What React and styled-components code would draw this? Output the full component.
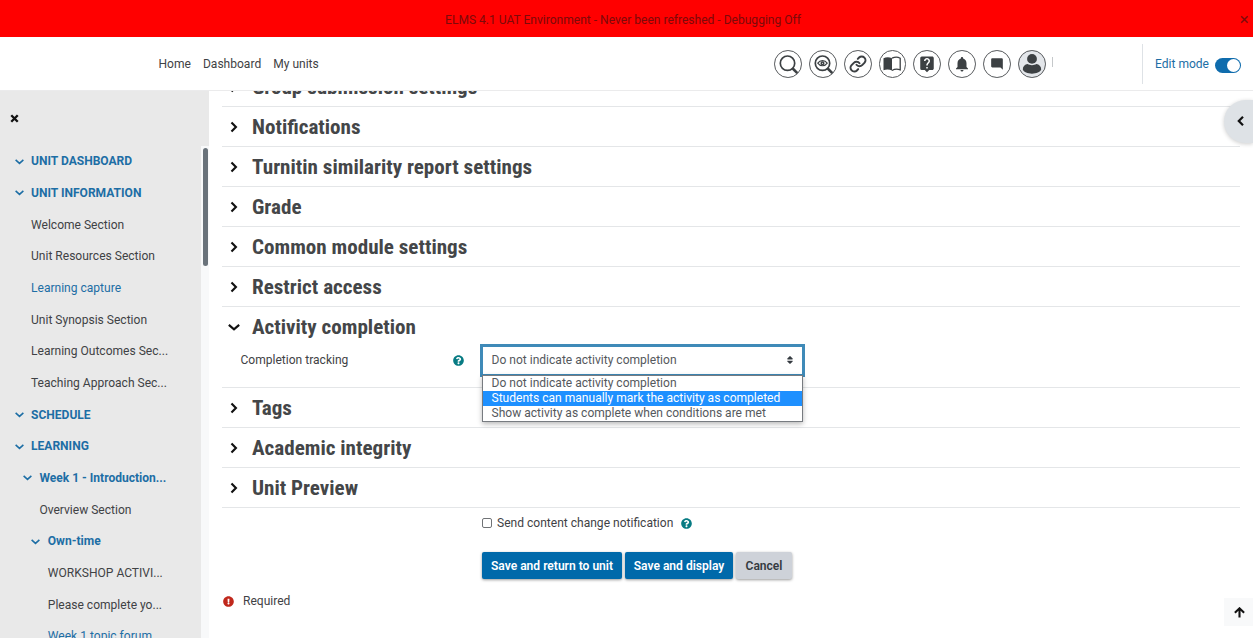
import React from "react";
import styled, { createGlobalStyle } from "styled-components";
import { FaQuestionCircle, FaExclamationCircle, FaSort } from "react-icons/fa";
import { FiLink } from "react-icons/fi";
import { MdLiveHelp, MdNotifications, MdModeComment } from "react-icons/md";

const Global = createGlobalStyle`
  * { box-sizing: border-box; }
  html, body { margin: 0; height: 100%; overflow: hidden; }
  body { font-family: Roboto, "Liberation Sans", sans-serif; font-size: 12.05px; color: #3f4245; background: #fff; }
  button { font: inherit; border: 0; margin: 0; }
`;

const Page = styled.div`
  display: flex;
  flex-direction: column;
  height: 638px;
  width: 1253px;
  position: relative;
  overflow: hidden;
`;

const Alert = styled.div`
  display: flex;
  align-items: center;
  flex: 0 0 37px;
  background: #ff0000;
  color: #7c0a0a;
  padding: 2px 4px 0 0;
`;
const AlertText = styled.div`
  flex: 1;
  text-align: center;
  padding-left: 6px;
  white-space: nowrap;
`;

const TopBar = styled.header`
  display: flex;
  align-items: center;
  flex: 0 0 54px;
  border-bottom: 1px solid #ebebec;
  background: #fff;
`;
const Nav = styled.nav`
  display: flex;
  gap: 12px;
  flex: 1;
  padding-left: 158.5px;
`;
const NavLink = styled.span`
  white-space: nowrap;
`;
const Tools = styled.div`
  display: flex;
  align-items: center;
  gap: 7px;
  padding-top: 1px;
`;
const Round = styled.span`
  display: flex;
  align-items: center;
  justify-content: center;
  width: 27.8px;
  height: 27.8px;
  border-radius: 50%;
  border: 1px solid #55585b;
  color: #3c4043;
  background: ${(p) => (p.$filled ? "#e3e6ea" : "#fff")};
`;
const Tick = styled.span`
  width: 1px;
  height: 10px;
  margin: -3px 0 0 -1px;
  background: #c5c8ca;
`;
const EditMode = styled.div`
  display: flex;
  align-items: center;
  gap: 6px;
  height: 40px;
  width: 111px;
  margin-left: 89.5px;
  padding-left: 12px;
  border-left: 1px solid #dee2e6;
  color: #1d6ea5;
`;
const Toggle = styled.span`
  display: flex;
  justify-content: flex-end;
  width: 26px;
  height: 15px;
  padding: 1px;
  margin-top: 3px;
  border-radius: 8px;
  background: #0f6cad;
`;
const Knob = styled.span`
  width: 13px;
  height: 13px;
  border-radius: 50%;
  background: #fff;
`;

const Body = styled.div`
  display: flex;
  flex: 1;
  min-height: 0;
`;
const Sidebar = styled.aside`
  display: flex;
  flex-direction: column;
  flex: 0 0 209px;
  background: #e9e9e9;
`;
const SideHead = styled.div`
  display: flex;
  align-items: center;
  flex: 0 0 55px;
  padding-left: 10px;
`;
const SideScroll = styled.div`
  display: flex;
  flex: 1;
  min-height: 0;
`;
const Tree = styled.div`
  flex: 0 0 201px;
  overflow: hidden;
`;
const Track = styled.div`
  flex: 1;
  padding: 2px 1px 0 2px;
  background: #f8f9fa;
`;
const Thumb = styled.div`
  height: 118px;
  width: 5px;
  border-radius: 3px;
  background: #6a737b;
`;
const TreeRow = styled.div`
  display: flex;
  align-items: center;
  height: 31.67px;
  padding: 0 0 0 ${(p) => 14.5 + p.$level * 8.4}px;
  &:first-child { margin-top: -0.5px; }
  white-space: nowrap;
  color: ${(p) => (p.$link ? "#1d6ea5" : "#3f4245")};
  font-weight: ${(p) => (p.$open ? 700 : 400)};
  svg { color: #1d6ea5; }
`;
const TreeIcon = styled.span`
  display: flex;
  width: 16.5px;
`;

const Main = styled.main`
  display: flex;
  flex-direction: column;
  flex: 1;
  overflow: hidden;
  padding: 0 13px 0 13px;
`;
const Section = styled.section`
  flex: 0 0 ${(p) => p.$height || 40}px;
  border-bottom: 1px solid #e4e6e8;
  &:first-child { margin-top: -24px; }
`;
const SectionHead = styled.div`
  display: flex;
  align-items: center;
  height: 39px;
  padding: 0 0 0 6px;
  color: #111;
`;
const SectionTitle = styled.h3`
  margin: 1px 0 0 12px;
  font-family: "Roboto Condensed", Roboto, sans-serif;
  font-stretch: 75%;
  font-size: 21.1px;
  font-weight: 700;
  line-height: 24px;
  color: #444648;
  white-space: nowrap;
`;
const Field = styled.div`
  display: flex;
  align-items: center;
  height: 30px;
  margin-top: -1px;
  padding-left: 18.5px;
`;
const FieldLabel = styled.label`
  flex: 0 0 212px;
`;
const SelectWrap = styled.div`
  position: relative;
  margin-left: 16px;
`;
const SelectBox = styled.div`
  display: flex;
  align-items: center;
  justify-content: space-between;
  width: 325px;
  height: 33px;
  padding: 0 7px 0 9px;
  border: 3px solid #3f8ab8;
  background: #fff;
  color: #55595d;
`;
const Menu = styled.div`
  position: absolute;
  z-index: 2;
  top: 31px;
  left: 2px;
  width: 321px;
  height: 47px;
  border: 1px solid #777b80;
  background: #fff;
  box-shadow: 0 2px 5px rgba(0, 0, 0, 0.28);
`;
const Option = styled.div`
  height: 15px;
  line-height: 15px;
  padding-left: 9px;
  white-space: nowrap;
  color: ${(p) => (p.$active ? "#fff" : "#55595d")};
  background: ${(p) => (p.$active ? "#1e90ff" : "transparent")};
`;
const Help = styled(FaQuestionCircle)`
  color: #077b83;
  flex: none;
`;
const CheckRow = styled.div`
  display: flex;
  align-items: center;
  height: 30px;
  padding-left: 260px;
`;
const CheckBox = styled.span`
  width: 10px;
  height: 10px;
  border: 1px solid #707376;
  border-radius: 2px;
  margin-right: 5px;
`;
const CheckText = styled.span`
  margin-right: 8px;
`;
const Actions = styled.div`
  display: flex;
  gap: 3px;
  margin-top: 14px;
  padding-left: 260px;
`;
const Button = styled.button`
  height: 27px;
  width: ${(p) => p.$width}px;
  padding: 0;
  white-space: nowrap;
  font-weight: 600;
  border-radius: 2px;
  color: ${(p) => (p.$plain ? "#343a40" : "#fff")};
  background: ${(p) => (p.$plain ? "#ced2d9" : "#0069aa")};
  box-shadow: 0 1px 3px rgba(0, 0, 0, 0.4);
`;
const Required = styled.div`
  display: flex;
  align-items: center;
  gap: 9.5px;
  margin-top: 15px;
  padding-left: 0.5px;
  svg { color: #c0281c; }
`;

const Drawer = styled.div`
  position: absolute;
  right: 0;
  top: 100px;
  width: 29px;
  height: 43px;
  display: flex;
  align-items: center;
  padding: 0 0 2px 12px;
  border-radius: 22px 0 0 22px;
  background: #dee2e6;
  box-shadow: 0 1px 4px rgba(0, 0, 0, 0.2);
`;
const ToTop = styled.div`
  position: absolute;
  right: 0;
  top: 598px;
  width: 29px;
  height: 28px;
  display: flex;
  align-items: center;
  justify-content: center;
  padding-left: 1px;
  background: #f8f9fa;
`;

const Stroke = ({ d, size = 10, width = 2, color = "currentColor" }) => (
  <svg width={size} height={size} viewBox="0 0 10 10" fill="none" stroke={color} strokeWidth={width}>
    <path d={d} />
  </svg>
);
const RIGHT = "M2.9 1.3 6.6 5 2.9 8.7";
const DOWN = "M.7 3.2 5 7 9.3 3.2";
const LEFT = "M7 .8 2.8 5 7 9.2";
const CROSS = "M1.4 1.4 8.6 8.6M8.6 1.4 1.4 8.6";

const SearchIcon = ({ eye }) => (
  <svg width="20" height="20" viewBox="0 0 20 20" fill="none" stroke="currentColor">
    <circle cx="9.5" cy="9.2" r="7.2" strokeWidth="1.7" />
    <path d="M14.7 14.5 19.3 19.1" strokeWidth="2.5" />
    {eye && <path d="M4.8 9.2C7.1 5.8 11.9 5.8 14.2 9.2 11.9 12.6 7.1 12.6 4.8 9.2Z" strokeWidth="1.2" />}
    {eye && <circle cx="9.5" cy="9.2" r="1.3" strokeWidth="1.5" />}
  </svg>
);
const BookIcon = () => (
  <svg width="18" height="16" viewBox="0 0 18 16">
    <path d="M.5 2.2C3 .8 6.4.8 9 2.2v12.3C6.4 13.2 3 13.2.5 14.2Z" fill="currentColor" />
    <path d="M9 2.2C11.6.9 15 .9 17.2 2.2v11.6c-2.4-.8-5.8-.7-8.2.7" fill="none" stroke="currentColor" strokeWidth="1.3" />
  </svg>
);
const UserIcon = () => (
  <svg width="20" height="22" viewBox="0 0 20 22" fill="currentColor">
    <circle cx="10" cy="5.9" r="4.9" />
    <path d="M.8 16.6C.8 13.2 2.9 11.4 5.6 11c2.4 1.5 6.4 1.5 8.8 0 2.7.4 4.8 2.2 4.8 5.6C18.2 19.4 14.3 20.7 10 20.7S1.8 19.4.8 16.6Z" />
  </svg>
);

const tree = [
  ["UNIT DASHBOARD", 0, 1, 1],
  ["UNIT INFORMATION", 0, 1, 1],
  ["Welcome Section", 0, 0, 0],
  ["Unit Resources Section", 0, 0, 0],
  ["Learning capture", 0, 0, 1],
  ["Unit Synopsis Section", 0, 0, 0],
  ["Learning Outcomes Sec...", 0, 0, 0],
  ["Teaching Approach Sec...", 0, 0, 0],
  ["SCHEDULE", 0, 1, 1],
  ["LEARNING", 0, 1, 1],
  ["Week 1 - Introduction...", 1, 1, 1],
  ["Overview Section", 1, 0, 0],
  ["Own-time", 2, 1, 1],
  ["WORKSHOP ACTIVI...", 2, 0, 0],
  ["Please complete yo...", 2, 0, 0],
  ["Week 1 topic forum", 2, 0, 1],
];

const Collapsed = ({ title, height }) => (
  <Section $height={height}>
    <SectionHead>
      <Stroke d={RIGHT} size={12} width={1.8} />
      <SectionTitle>{title}</SectionTitle>
    </SectionHead>
  </Section>
);

export default function App() {
  return (
    <Page>
      <Global />
      <Alert>
        <AlertText>ELMS 4.1 UAT Environment - Never been refreshed - Debugging Off</AlertText>
        <Stroke d={CROSS} size={9} width={1.6} />
      </Alert>
      <TopBar>
        <Nav>
          <NavLink>Home</NavLink>
          <NavLink>Dashboard</NavLink>
          <NavLink>My units</NavLink>
        </Nav>
        <Tools>
          <Round><SearchIcon /></Round>
          <Round><SearchIcon eye /></Round>
          <Round><FiLink size={18} strokeWidth={2.7} /></Round>
          <Round><BookIcon /></Round>
          <Round><MdLiveHelp size={18} /></Round>
          <Round><MdNotifications size={18} /></Round>
          <Round><MdModeComment size={14} /></Round>
          <Round $filled><UserIcon /></Round>
          <Tick />
        </Tools>
        <EditMode>
          <span>Edit mode</span>
          <Toggle><Knob /></Toggle>
        </EditMode>
      </TopBar>
      <Body>
        <Sidebar>
          <SideHead><Stroke d={CROSS} size={9} width={2.6} color="#111" /></SideHead>
          <SideScroll>
            <Tree>
              {tree.map(([label, level, open, link]) => (
                <TreeRow key={label} $level={level} $open={open} $link={link}>
                  <TreeIcon>{open ? <Stroke d={DOWN} size={9} width={1.8} /> : null}</TreeIcon>
                  {label}
                </TreeRow>
              ))}
            </Tree>
            <Track><Thumb /></Track>
          </SideScroll>
        </Sidebar>
        <Main>
          <Collapsed title="Group submission settings" />
          <Collapsed title="Notifications" />
          <Collapsed title="Turnitin similarity report settings" />
          <Collapsed title="Grade" />
          <Collapsed title="Common module settings" />
          <Collapsed title="Restrict access" />
          <Section $height={81}>
            <SectionHead>
              <Stroke d={DOWN} size={12} width={1.8} />
              <SectionTitle>Activity completion</SectionTitle>
            </SectionHead>
            <Field>
              <FieldLabel>Completion tracking</FieldLabel>
              <Help size={11} />
              <SelectWrap>
                <SelectBox>
                  Do not indicate activity completion
                  <FaSort size={10} color="#343a40" />
                </SelectBox>
                <Menu>
                  <Option>Do not indicate activity completion</Option>
                  <Option $active>Students can manually mark the activity as completed</Option>
                  <Option>Show activity as complete when conditions are met</Option>
                </Menu>
              </SelectWrap>
            </Field>
          </Section>
          <Collapsed title="Tags" />
          <Collapsed title="Academic integrity" />
          <Collapsed title="Unit Preview" />
          <CheckRow>
            <CheckBox />
            <CheckText>Send content change notification</CheckText>
            <Help size={11} />
          </CheckRow>
          <Actions>
            <Button $width={140}>Save and return to unit</Button>
            <Button $width={108}>Save and display</Button>
            <Button $width={56} $plain>Cancel</Button>
          </Actions>
          <Required>
            <FaExclamationCircle size={11} />
            Required
          </Required>
        </Main>
      </Body>
      <Drawer><Stroke d={LEFT} size={10} width={2.2} color="#111" /></Drawer>
      <ToTop>
        <Stroke d="M5 9.6V1.2M.8 5.2 5 1.2 9.2 5.2" size={11} width={1.9} color="#111" />
      </ToTop>
    </Page>
  );
}
